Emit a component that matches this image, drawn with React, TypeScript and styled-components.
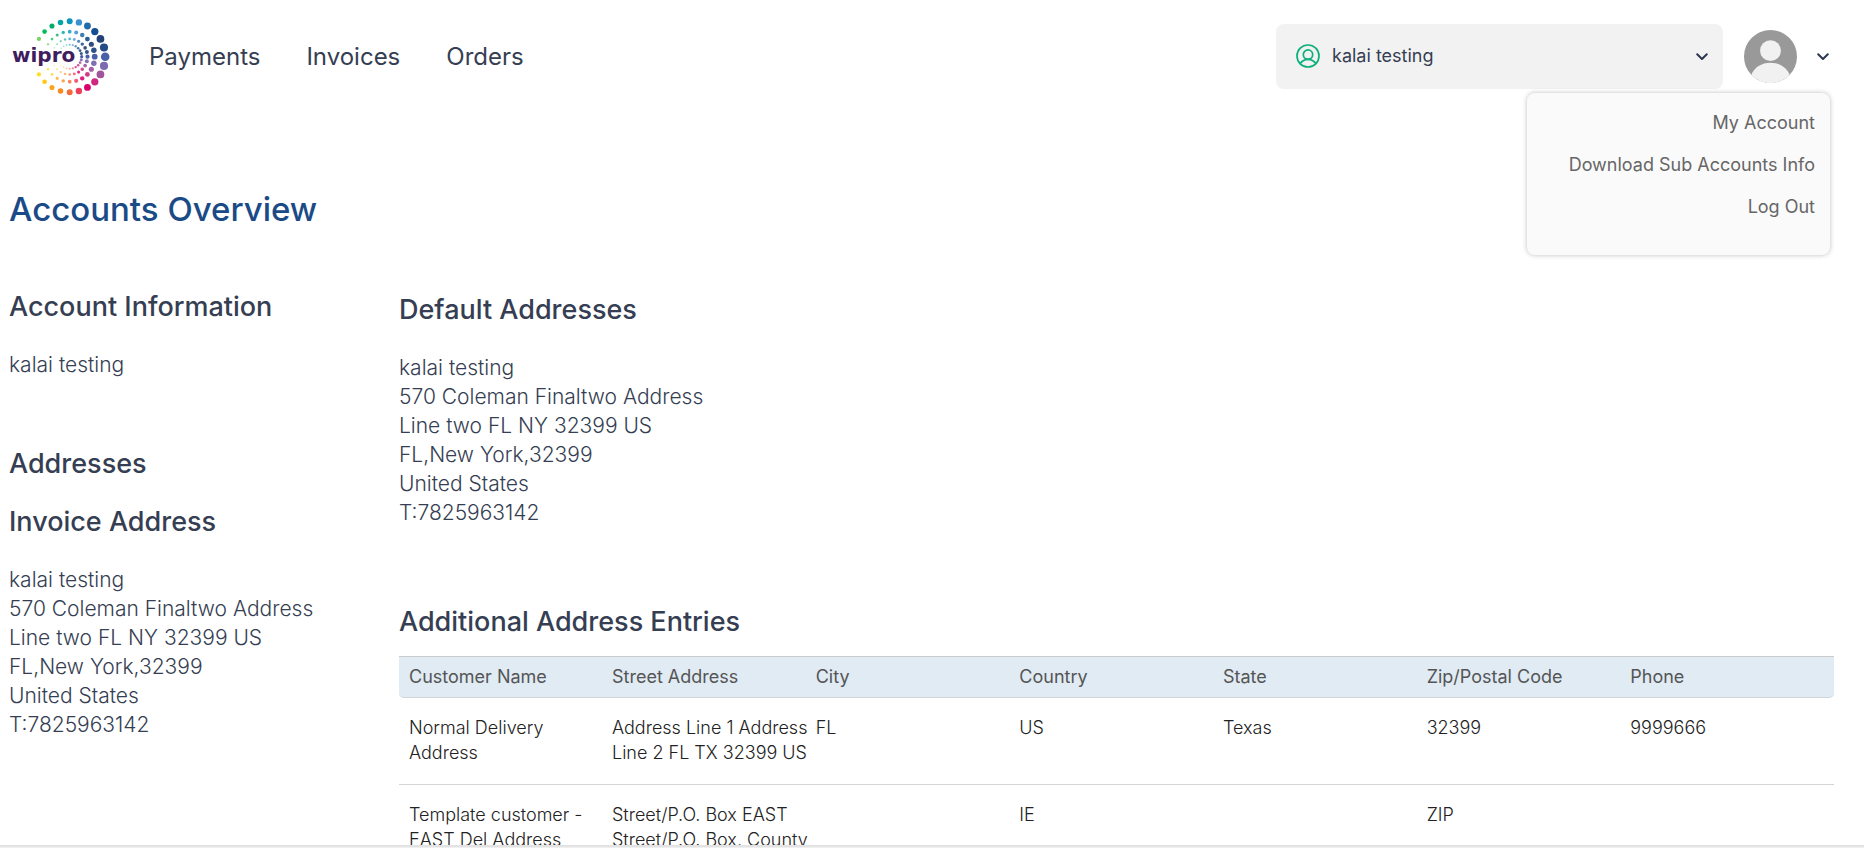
import React from "react";
import styled, { createGlobalStyle } from "styled-components";

const GlobalStyle = createGlobalStyle`
  *, *::before, *::after { box-sizing: border-box; }
  body {
    margin: 0;
    background: #fff;
    color: #353e52;
    font-family: Inter, "Liberation Sans", sans-serif;
    overflow: hidden;
  }
  h1, h2, p, ul { margin: 0; padding: 0; }
`;

const Page = styled.div`
  display: flex;
  flex-direction: column;
  height: 100vh;
`;

const Viewport = styled.div`
  flex: 1;
  min-height: 0;
  overflow: hidden;
`;

const BottomEdge = styled.div`
  flex: none;
  height: 3px;
  background: #efefef;
  border-top: 2px solid #e3e3e3;
`;

const Header = styled.header`
  display: flex;
  align-items: center;
  height: 112px;
  padding: 0 34px 0 10px;
`;

const Logo = styled.svg`
  flex: none;
  width: 104px;
  height: 80px;
`;

const Nav = styled.nav`
  display: flex;
  gap: 46px;
  margin-left: 35px;
  padding-top: 2px;
`;

const NavLink = styled.a`
  color: #353e52;
  font-size: 24px;
  line-height: 32px;
  text-decoration: none;
`;

const Tools = styled.div`
  position: relative;
  display: flex;
  align-items: center;
  margin-left: auto;
`;

const AccountPicker = styled.button`
  display: flex;
  align-items: center;
  gap: 12px;
  width: 447px;
  height: 65px;
  padding: 0 14px 0 20px;
  border: 0;
  border-radius: 8px;
  background: #f2f2f2;
  color: #353e52;
  font: 400 18px/24px Inter, "Liberation Sans", sans-serif;
  text-align: left;
`;

const PickerName = styled.span`
  flex: 1;
`;

const ProfileButton = styled.button`
  display: flex;
  align-items: center;
  gap: 19px;
  margin-left: 21px;
  padding: 0;
  border: 0;
  background: none;
`;

const Menu = styled.ul`
  position: absolute;
  top: 69px;
  right: 0;
  width: 303px;
  && { padding: 9px 15px 27px; }
  border-radius: 8px;
  background: #fafafa;
  box-shadow: 0 0 5px rgba(0, 0, 0, 0.26);
  list-style: none;
  text-align: right;
`;

const MenuLink = styled.a`
  display: block;
  color: #666;
  font-size: 18px;
  line-height: 42px;
  text-decoration: none;
`;

const Main = styled.main`
  padding: 72px 30px 0 9px;
`;

const Title = styled.h1`
  color: #1b4b87;
  font-size: 33px;
  font-weight: 500;
  line-height: 50px;
`;

const Columns = styled.div`
  display: grid;
  grid-template-columns: 390px minmax(0, 1fr);
  margin-top: 53px;
`;

const Column = styled.div<{ $offset?: number }>`
  padding-top: ${(p) => p.$offset ?? 0}px;
`;

const Section = styled.section<{ $after: number }>`
  margin-bottom: ${(p) => p.$after}px;
`;

const Heading = styled.h2`
  color: #353e52;
  font-size: 27px;
  font-weight: 500;
  line-height: 40px;
`;

const Lines = styled.p`
  && { margin-top: 23px; }
  font-size: 21px;
  font-weight: 300;
  line-height: 29px;
`;

const Table = styled.table`
  width: 100%;
  margin-top: 14px;
  border-top: 1px solid #ccc;
  border-collapse: separate;
  border-spacing: 0;
  table-layout: fixed;
  text-align: left;
`;

const Th = styled.th`
  height: 41px;
  padding: 0 0 2px;
  border-bottom: 1px solid #d3d6d9;
  background: #e0ebf4;
  color: #555;
  font-size: 18px;
  font-weight: 400;
  &:first-child {
    width: 213px;
    padding-left: 10px;
    border-radius: 0 0 0 5px;
  }
  &:last-child { border-radius: 0 0 5px 0; }
`;

const Td = styled.td`
  height: 87px;
  padding: 17px 0 19px;
  border-bottom: 1px solid #d4d4d4;
  color: #222;
  font-size: 18px;
  font-weight: 300;
  line-height: 25px;
  vertical-align: top;
  &:first-child { padding-left: 10px; }
`;

const upperColors = [
  "#4960a8", "#254b86", "#234176", "#124f92", "#226cac", "#3e91d0",
  "#0b96bd", "#00a4a4", "#00ab6c", "#00bf5b", "#79d365",
];
const lowerColors = [
  "#7c6bb1", "#a1559d", "#cf2681", "#d80070", "#ef3e5b", "#f36c38",
  "#f78a20", "#fba51c", "#ffc915", "#ffdd22",
];

const rings = [
  { radius: 35.5, near: 4.3, far: 2.1, fade: 0 },
  { radius: 25, near: 2.9, far: 1.2, fade: 0.03 },
  { radius: 17.8, near: 2.1, far: 0.8, fade: 0.05 },
  { radius: 12, near: 1.6, far: 0.6, fade: 0.07 },
];

const steps = Array.from({ length: 21 }, (_, i) => i - 10);

function WiproLogo() {
  return (
    <Logo viewBox="0 0 104 80" role="img" aria-label="wipro">
      {rings.map((ring) =>
        steps.map((i) => {
          const angle = (i * 15 * Math.PI) / 180;
          const step = Math.abs(i);
          return (
            <circle
              key={`${ring.radius}:${i}`}
              cx={59.7 + ring.radius * Math.cos(angle)}
              cy={40.7 - ring.radius * Math.sin(angle)}
              r={ring.near - ((ring.near - ring.far) * step) / 10}
              fill={i >= 0 ? upperColors[i] : lowerColors[step - 1]}
              opacity={1 - step * ring.fade}
            />
          );
        })
      )}
      <text x="2" y="46" fontFamily="DejaVu Sans, sans-serif" fontWeight="700" fontSize="20" fill="#3f1d5e">wipro</text>
    </Logo>
  );
}

function Chevron() {
  return (
    <svg width="14" height="14" viewBox="0 0 14 14" fill="none" stroke="#2c3650" strokeWidth="2" strokeLinecap="round" strokeLinejoin="round" aria-hidden="true">
      <path d="M2.2 5.2 7 10 11.8 5.2" />
    </svg>
  );
}

const addressLines = [
  "kalai testing",
  "570 Coleman Finaltwo Address",
  "Line two FL NY 32399 US",
  "FL,New York,32399",
  "United States",
  "T:7825963142",
];

function Address({ lines }: { lines: string[] }) {
  return (
    <Lines>
      {lines.map((line) => (
        <React.Fragment key={line}>{line}<br /></React.Fragment>
      ))}
    </Lines>
  );
}

const columns = ["Customer Name", "Street Address", "City", "Country", "State", "Zip/Postal Code", "Phone"];
const rows = [
  ["Normal Delivery Address", "Address Line 1 Address Line 2 FL TX 32399 US", "FL", "US", "Texas", "32399", "9999666"],
  ["Template customer - EAST Del Address", "Street/P.O. Box EAST Street/P.O. Box, County", "", "IE", "", "ZIP", ""],
];

export default function App() {
  return (
    <Page>
      <GlobalStyle />
      <Viewport>
        <Header>
          <WiproLogo />
          <Nav>
            <NavLink href="#payments">Payments</NavLink>
            <NavLink href="#invoices">Invoices</NavLink>
            <NavLink href="#orders">Orders</NavLink>
          </Nav>
          <Tools>
            <AccountPicker type="button">
              <svg width="24" height="24" viewBox="0 0 24 24" fill="none" stroke="#0bb07b" strokeWidth="1.7" aria-hidden="true">
                <circle cx="12" cy="12" r="11" />
                <circle cx="12" cy="10.6" r="4.7" />
                <path d="M4.2 19.6C6 17 8.6 15.4 12 15.4s6 1.6 7.8 4.2" />
              </svg>
              <PickerName>kalai testing</PickerName>
              <Chevron />
            </AccountPicker>
            <ProfileButton type="button" aria-label="Profile menu">
              <svg width="53" height="53" viewBox="0 0 53 53" aria-hidden="true">
                <circle cx="26.5" cy="26.5" r="26.5" fill="#999" />
                <circle cx="26.5" cy="20.7" r="10.4" fill="#f1f1f1" />
                <path d="M7.4 45C10 37.5 17.5 32.8 26.5 32.8S43 37.5 45.6 45A26.5 26.5 0 0 1 7.4 45Z" fill="#f1f1f1" />
              </svg>
              <Chevron />
            </ProfileButton>
            <Menu>
              <li><MenuLink href="#account">My Account</MenuLink></li>
              <li><MenuLink href="#download">Download Sub Accounts Info</MenuLink></li>
              <li><MenuLink href="#logout">Log Out</MenuLink></li>
            </Menu>
          </Tools>
        </Header>
        <Main>
          <Title>Accounts Overview</Title>
          <Columns>
            <Column>
              <Section $after={65}>
                <Heading>Account Information</Heading>
                <Address lines={["kalai testing"]} />
              </Section>
              <Section $after={18}>
                <Heading>Addresses</Heading>
              </Section>
              <Section $after={0}>
                <Heading>Invoice Address</Heading>
                <Address lines={addressLines} />
              </Section>
            </Column>
            <Column $offset={3}>
              <Section $after={75}>
                <Heading>Default Addresses</Heading>
                <Address lines={addressLines} />
              </Section>
              <Section $after={0}>
                <Heading>Additional Address Entries</Heading>
                <Table>
                  <thead>
                    <tr>{columns.map((c) => <Th key={c} scope="col">{c}</Th>)}</tr>
                  </thead>
                  <tbody>
                    {rows.map((row) => (
                      <tr key={row[0]}>{row.map((cell, i) => <Td key={i}>{cell}</Td>)}</tr>
                    ))}
                  </tbody>
                </Table>
              </Section>
            </Column>
          </Columns>
        </Main>
      </Viewport>
      <BottomEdge />
    </Page>
  );
}
